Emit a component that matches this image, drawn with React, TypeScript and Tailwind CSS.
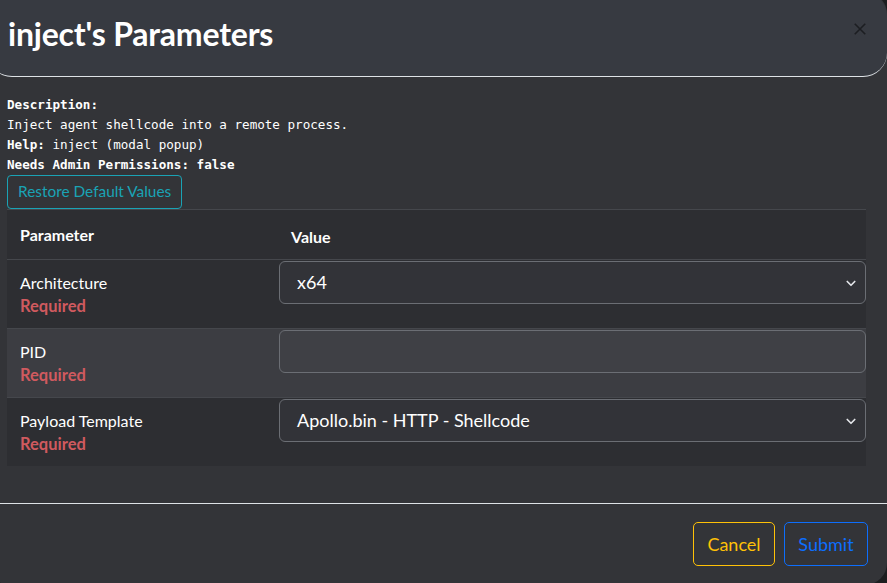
import React from 'react';

const ui = { fontFamily: 'Lato, "Open Sans", sans-serif' };
const mono = { fontFamily: '"DejaVu Sans Mono", "Liberation Mono", monospace' };

const Chevron = () => (
  <svg width="12" height="12" viewBox="0 0 16 16" fill="none">
    <path d="M3 6l5 5 5-5" stroke="#e5e7eb" strokeWidth="2.2" strokeLinecap="round" strokeLinejoin="round" />
  </svg>
);

interface ParamRowProps {
  name: string;
  striped?: boolean;
  children: React.ReactNode;
}

const ParamRow: React.FC<ParamRowProps> = ({ name, striped, children }) => (
  <div className={`grid grid-cols-[272px_1fr] h-[69px] border-t border-[#45474c] ${striped ? 'bg-[#3c3d42]' : ''}`}>
    <div className="pl-[13px] pt-[11px] flex flex-col">
      <span className="text-[16px] leading-[23px] text-white">{name}</span>
      <span className="text-[16.5px] leading-[24px] font-bold text-[#d05a5f]">Required</span>
    </div>
    <div className="pt-[1px]">{children}</div>
  </div>
);

const SelectBox: React.FC<{ value: string }> = ({ value }) => (
  <div className="h-[43px] rounded-[6px] border border-[#6b6e74] bg-[#323338] flex items-center justify-between pl-[17px] pr-[8px]">
    <span className="text-[18px] text-white">{value}</span>
    <Chevron />
  </div>
);

export default function App() {
  return (
    <div className="w-[887px] h-[583px] overflow-hidden bg-[#1d1e20]" style={ui}>
      <div className="-ml-[12px] -mt-[8px] w-[899px] h-[593px] rounded-[22px] bg-[#333438] flex flex-col">
        {/* Header */}
        <div className="h-[85px] shrink-0 rounded-[24px] bg-[#373a41] border-b border-[#dee2e6] flex items-center justify-between pl-[20px] pr-[20px]">
          <h1 className="text-[32px] font-bold text-white tracking-[-0.2px]">inject's Parameters</h1>
          <svg width="14" height="14" viewBox="0 0 16 16" className="-mt-[10px]">
            <path d="M2 2l12 12M14 2L2 14" stroke="#1c1e22" strokeWidth="1.8" />
          </svg>
        </div>

        {/* Body */}
        <div className="flex-1 pl-[19px] pr-[21px] pt-[18px]">
          <div className="text-[12.6px] leading-[20px] text-white" style={mono}>
            <div className="font-bold">Description:</div>
            <div>Inject agent shellcode into a remote process.</div>
            <div><span className="font-bold">Help:</span> inject (modal popup)</div>
            <div className="font-bold">Needs Admin Permissions: false</div>
          </div>
          <button className="h-[34px] px-[10px] rounded-[4px] border border-[#1aa3b5] text-[#1aa3b5] text-[15.4px]">
            Restore Default Values
          </button>

          <div className="bg-[#2d2e32]">
            <div className="grid grid-cols-[272px_1fr] h-[50px] border-t border-[#45474c] text-white text-[16px] font-bold">
              <div className="pl-[13px] pt-[13px]">Parameter</div>
              <div className="pl-[12px] pt-[15px]">Value</div>
            </div>
            <ParamRow name="Architecture">
              <SelectBox value="x64" />
            </ParamRow>
            <ParamRow name="PID" striped>
              <div className="h-[43px] rounded-[6px] border border-[#6b6e74] bg-[#3f4045]" />
            </ParamRow>
            <ParamRow name="Payload Template">
              <SelectBox value="Apollo.bin - HTTP - Shellcode" />
            </ParamRow>
          </div>
        </div>

        {/* Footer */}
        <div className="h-[82px] shrink-0 border-t border-[#dee2e6] flex justify-end items-start pt-[18px] pr-[19px] gap-[9px]">
          <button className="h-[44px] w-[82px] rounded-[5px] border border-[#ffc107] text-[#ffc107] text-[18px]">Cancel</button>
          <button className="h-[44px] w-[84px] rounded-[5px] border border-[#0d6efd] text-[#0d6efd] text-[18px]">Submit</button>
        </div>
      </div>
    </div>
  );
}
